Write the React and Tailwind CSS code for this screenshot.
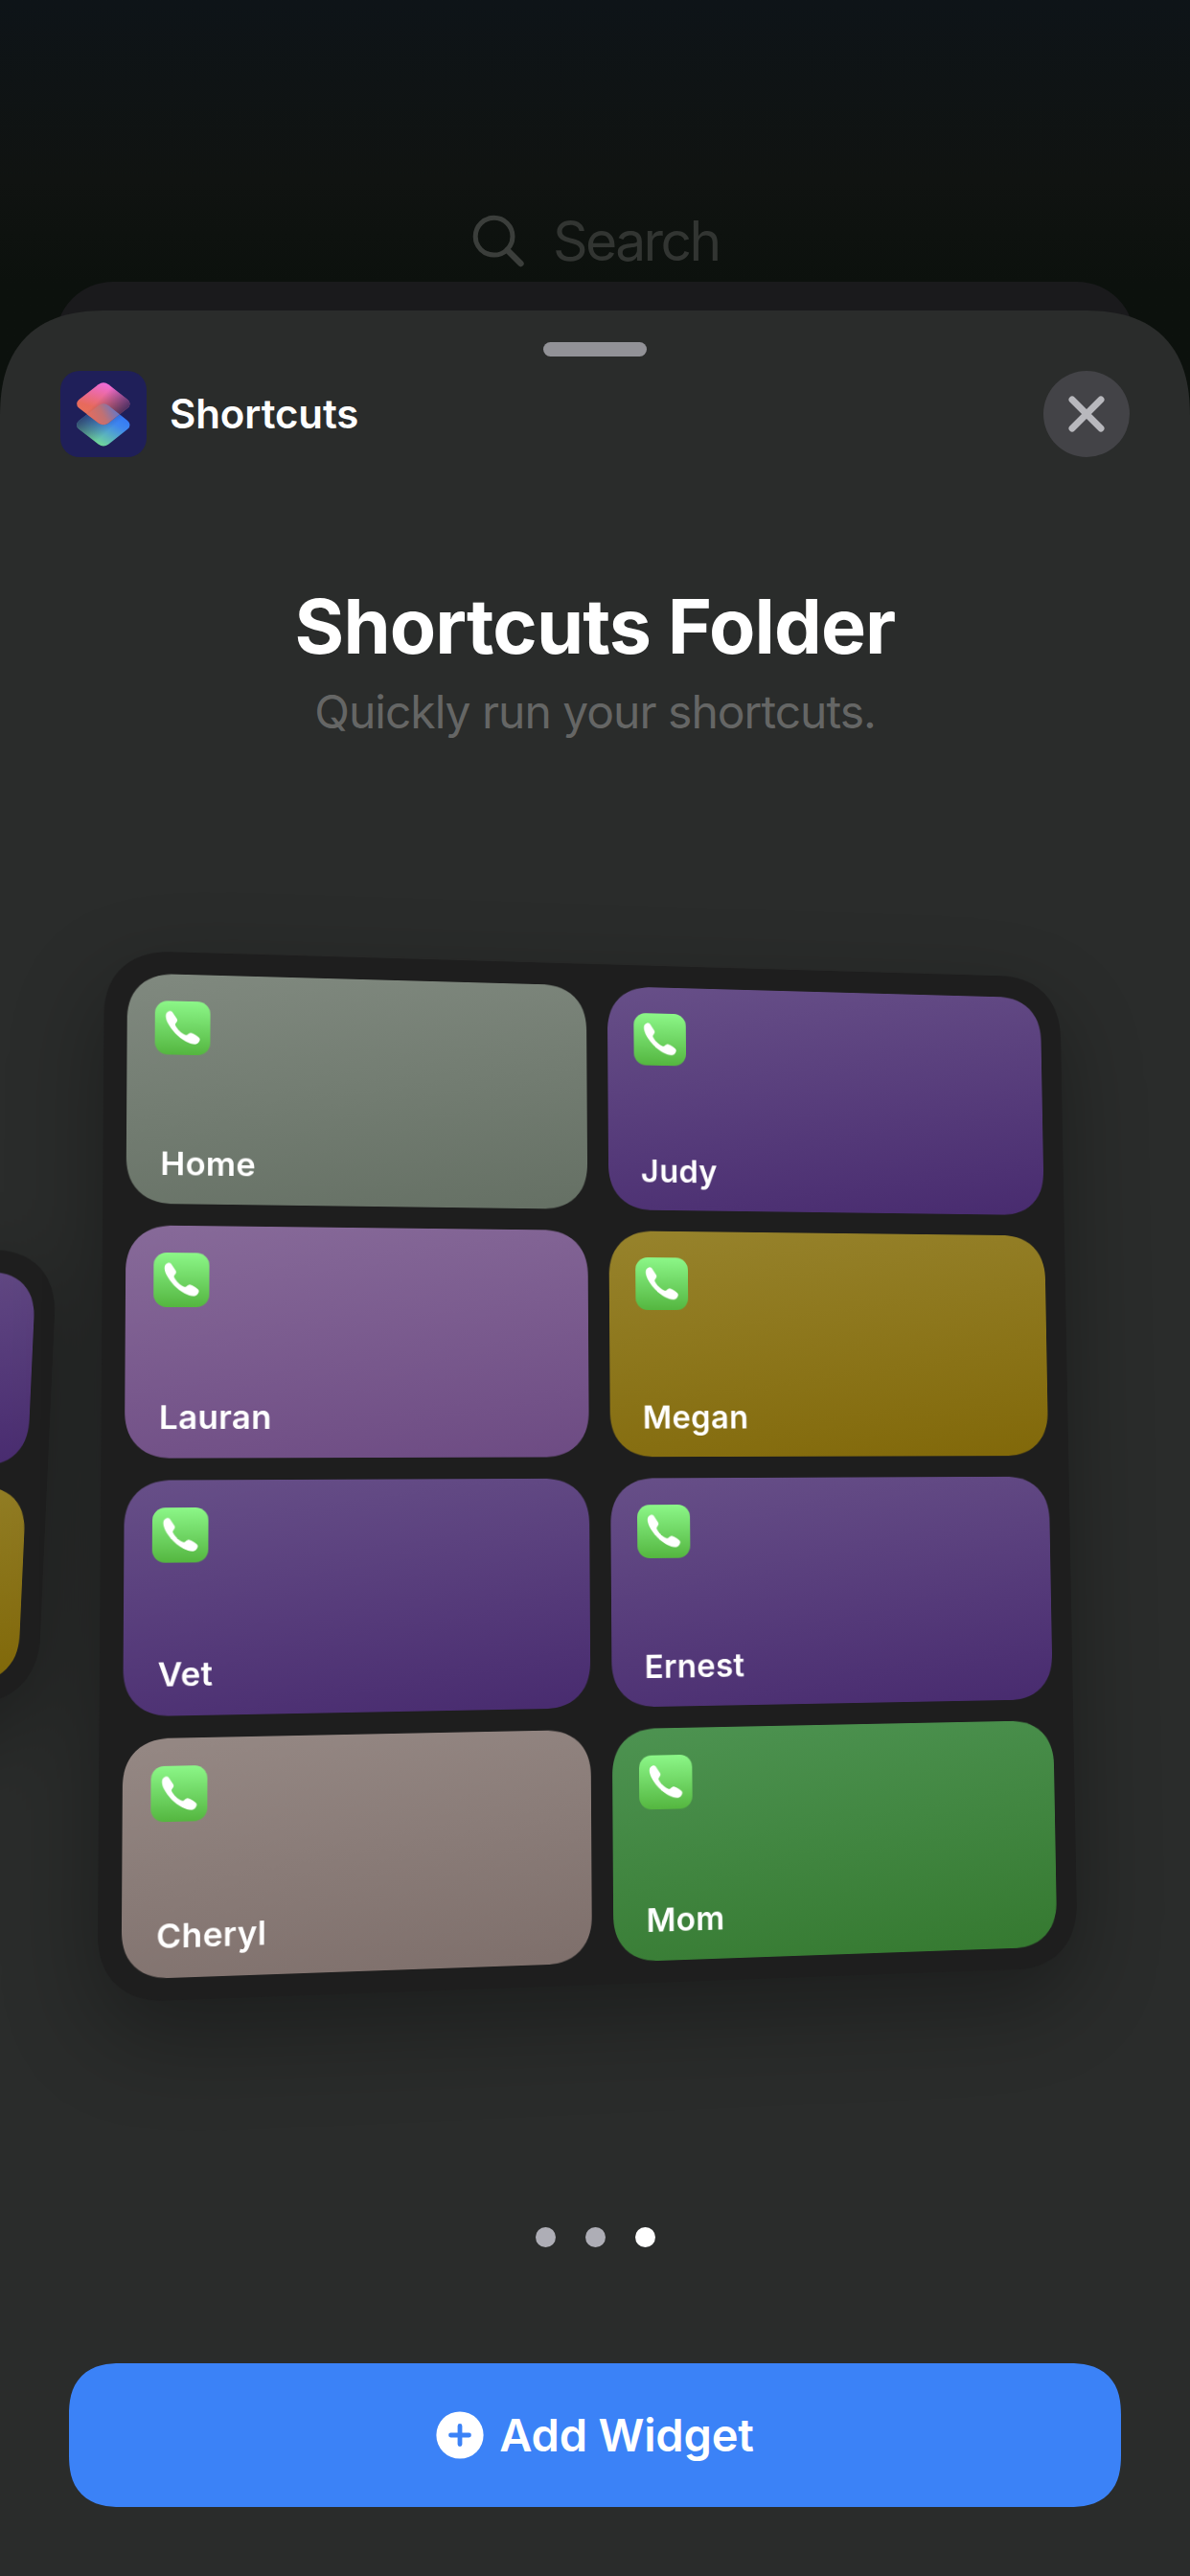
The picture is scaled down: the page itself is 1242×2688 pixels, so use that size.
const WIDGET_W = 1092

const largeTiles = [
  { name: 'Home', bg: 'bg-[linear-gradient(172deg,#80897f,#657064)]' },
  { name: 'Judy', bg: 'bg-[linear-gradient(172deg,#674f88,#482b6f)]' },
  { name: 'Lauran', bg: 'bg-[linear-gradient(172deg,#876a99,#6d4b83)]' },
  { name: 'Megan', bg: 'bg-[linear-gradient(172deg,#97832c,#816809)]' },
  { name: 'Vet', bg: 'bg-[linear-gradient(172deg,#674f88,#482b6f)]' },
  { name: 'Ernest', bg: 'bg-[linear-gradient(172deg,#674f88,#482b6f)]' },
  { name: 'Cheryl', bg: 'bg-[linear-gradient(172deg,#958884,#7e6f6b)]' },
  { name: 'Mom', bg: 'bg-[linear-gradient(172deg,#4d9351,#357930)]' },
]

// The neighbouring page only peeks in, its labels are out of view
const mediumTiles = largeTiles.slice(0, 4).map(tile => ({ ...tile, hideLabel: true }))

// Corners of each card on the carousel: top left, top right, bottom right, bottom left
const largeQuad = [[108.9, 218.3], [1106, 247], [1125, 1279.8], [101.6, 1317.3]]
const mediumQuad = [[-1060, 503], [60, 533], [39, 1002], [-1090, 1043]]

// matrix3d that maps a flat w x h box onto four corners
function quadTransform(w, h, [[x0, y0], [x1, y1], [x2, y2], [x3, y3]]) {
  const dx1 = x1 - x2
  const dx2 = x3 - x2
  const dy1 = y1 - y2
  const dy2 = y3 - y2
  const sx = x0 - x1 + x2 - x3
  const sy = y0 - y1 + y2 - y3
  const det = dx1 * dy2 - dx2 * dy1
  const g = (sx * dy2 - dx2 * sy) / det
  const k = (dx1 * sy - sx * dy1) / det
  const m = [
    (x1 - x0 + g * x1) / w, (y1 - y0 + g * y1) / w, 0, g / w,
    (x3 - x0 + k * x3) / h, (y3 - y0 + k * y3) / h, 0, k / h,
    0, 0, 1, 0,
    x0, y0, 0, 1,
  ]
  return `matrix3d(${m.map(n => n.toFixed(10)).join(',')})`
}

function PhoneIcon() {
  return (
    <div className="flex h-[60px] w-[60px] rounded-[14px] bg-linear-to-b from-[#8cf788] to-[#54b63f]">
      <svg viewBox="0 0 60 60" className="h-full w-full" fill="#fff">
        <path d="M13.2 12.7C14.7 11.3 17.2 10.5 18.7 12.2L23.8 20C25.4 23.2 21.3 24.2 22 27C24.2 31.6 28.6 35.8 32.6 37.6C35.8 38.7 36 34.9 39.4 35.2C42 36 45.6 38 48 40.4C49.6 42.2 48.2 44.8 46.6 46.4C43.8 49 38.4 47.4 33.6 44.9C25 40.3 17.6 32 13.8 24.4C11.5 19.6 10.9 15 13.2 12.7Z" />
      </svg>
    </div>
  )
}

function Tile({ name, bg, hideLabel }) {
  return (
    <div className={`flex flex-col justify-between rounded-[52px] pt-[30px] pb-[21px] pl-[30px] [corner-shape:superellipse(1.2)] ${bg}`}>
      <PhoneIcon />
      {!hideLabel && (
        <span className="pl-[7px] text-[36px] leading-[48px] font-semibold tracking-[0.3px] text-white">{name}</span>
      )}
    </div>
  )
}

function Widget({ tiles, height, quad, rows }) {
  return (
    <div
      className={`absolute top-0 left-0 grid w-[1092px] origin-top-left grid-cols-2 gap-6 rounded-[74px] bg-[#1e1e1e] p-[24.5px] shadow-[0_36px_100px_rgba(0,0,0,0.32)] [corner-shape:superellipse(1.2)] ${rows}`}
      style={{ transform: quadTransform(WIDGET_W, height, quad) }}
    >
      {tiles.map(tile => <Tile key={tile.name} {...tile} />)}
    </div>
  )
}

function ShortcutsLogo() {
  return (
    <svg viewBox="0 0 90 90" className="h-[90px] w-[90px]">
      <defs>
        <linearGradient id="top" x1="0.6" y1="0" x2="0.3" y2="0.8">
          <stop offset="0" stopColor="#f06be0" />
          <stop offset="0.75" stopColor="#e76a5c" />
          <stop offset="1" stopColor="#e8705a" />
        </linearGradient>
        <linearGradient id="topFade" x1="0.5" y1="0.3" x2="0.95" y2="0.65">
          <stop offset="0" stopColor="#1f1f59" stopOpacity="0" />
          <stop offset="1" stopColor="#1f1f59" stopOpacity="0.8" />
        </linearGradient>
        <linearGradient id="bottom" x1="0.9" y1="0.3" x2="0.4" y2="1">
          <stop offset="0" stopColor="#3478f6" />
          <stop offset="0.3" stopColor="#3f87ee" />
          <stop offset="1" stopColor="#74dc92" />
        </linearGradient>
        <linearGradient id="bottomFade" x1="0.05" y1="0.35" x2="0.5" y2="0.75">
          <stop offset="0" stopColor="#1f1f59" stopOpacity="0.75" />
          <stop offset="1" stopColor="#1f1f59" stopOpacity="0" />
        </linearGradient>
        <linearGradient id="overlap" x1="0.22" y1="0.85" x2="0.82" y2="0.6">
          <stop offset="0" stopColor="#e76c5d" />
          <stop offset="0.45" stopColor="#bf7174" />
          <stop offset="1" stopColor="#5079dc" />
        </linearGradient>
        <clipPath id="lower">
          <path d="M39.6 36.3Q45 32.2 50.4 36.3L70.2 52Q75 56.4 70.2 60.8L50.4 76.4Q45 80.5 39.6 76.4L19.4 60.8Q14.6 56.4 19.4 52Z" />
        </clipPath>
      </defs>
      <rect width="90" height="90" rx="20" fill="#1f1f59" />
      <path fill="url(#bottom)" d="M39.6 36.3Q45 32.2 50.4 36.3L70.2 52Q75 56.4 70.2 60.8L50.4 76.4Q45 80.5 39.6 76.4L19.4 60.8Q14.6 56.4 19.4 52Z" />
      <path fill="url(#bottomFade)" d="M39.6 36.3Q45 32.2 50.4 36.3L70.2 52Q75 56.4 70.2 60.8L50.4 76.4Q45 80.5 39.6 76.4L19.4 60.8Q14.6 56.4 19.4 52Z" />
      <path fill="url(#top)" d="M39.6 14.2Q45 10.1 50.4 14.2L70.2 29.9Q75 34.3 70.2 38.7L50.4 54.3Q45 58.4 39.6 54.3L19.4 38.7Q14.6 34.3 19.4 29.9Z" />
      <path fill="url(#topFade)" d="M39.6 14.2Q45 10.1 50.4 14.2L70.2 29.9Q75 34.3 70.2 38.7L50.4 54.3Q45 58.4 39.6 54.3L19.4 38.7Q14.6 34.3 19.4 29.9Z" />
      <g clipPath="url(#lower)">
        <path fill="url(#overlap)" d="M39.6 14.2Q45 10.1 50.4 14.2L70.2 29.9Q75 34.3 70.2 38.7L50.4 54.3Q45 58.4 39.6 54.3L19.4 38.7Q14.6 34.3 19.4 29.9Z" />
      </g>
    </svg>
  )
}

export default function App() {
  return (
    <div className="flex h-[2688px] w-[1242px] flex-col overflow-hidden bg-linear-to-b from-[#0e1418] via-[#101311] via-7% to-[#0c110d] to-11% font-[Inter,'Liberation_Sans',sans-serif]">

      {/* Dimmed home screen search */}
      <div className="flex h-[324px] shrink-0 flex-col justify-between pt-[216px]">
        <div className="flex h-[72px] items-center pl-[491px]">
          <svg viewBox="0 0 60 60" className="h-[60px] w-[60px]" fill="none" stroke="#3b3e3b" strokeLinecap="round">
            <circle cx="24.6" cy="24.7" r="19.4" strokeWidth="5" />
            <path d="M38.5 39L52.5 53" strokeWidth="6.4" />
          </svg>
          <span className="pl-[26px] text-[57px] leading-[72px] tracking-[-2.6px] text-[#323532]">Search</span>
        </div>
        <div className="mx-[58px] -mb-[60px] h-[90px] shrink-0 rounded-t-[60px] bg-[#1a1a1c]" />
      </div>

      {/* Sheet */}
      <div className="relative flex grow flex-col overflow-hidden rounded-t-[112px] bg-[#2a2c2b] pt-[33px] [corner-shape:superellipse(1.3)]">
        <div className="h-[15px] w-[108px] shrink-0 self-center rounded-full bg-[#929297]" />

        <div className="mt-[15px] flex items-center px-[63px]">
          <ShortcutsLogo />
          <span className="pl-[24px] text-[42px] leading-[60px] font-semibold tracking-[-0.1px] text-white">Shortcuts</span>
          <button className="ml-auto flex h-[90px] w-[90px] items-center justify-center rounded-full bg-[#434347]">
            <svg viewBox="0 0 40 40" className="h-[40px] w-[40px]" stroke="#b8b8bd" strokeWidth="7" strokeLinecap="round">
              <path d="M5 5L35 35M35 5L5 35" />
            </svg>
          </button>
        </div>

        <h1 className="mt-[128px] text-center text-[79px] leading-[96px] font-bold tracking-[-0.9px] text-white">Shortcuts Folder</h1>
        <p className="mt-[12px] text-center text-[48px] leading-[60px] tracking-[-1px] text-[#656665]">Quickly run your shortcuts.</p>

        {/* Widget carousel */}
        <div className="relative h-[1551px] shrink-0">
          <Widget tiles={mediumTiles} height={510} quad={mediumQuad} rows="h-[510px] grid-rows-2" />
          <Widget tiles={largeTiles} height={1146} quad={largeQuad} rows="h-[1146px] grid-rows-4" />
        </div>

        <div className="flex justify-center gap-[31px]">
          <span className="h-[21px] w-[21px] rounded-full bg-[#aeaeb6]" />
          <span className="h-[21px] w-[21px] rounded-full bg-[#aeaeb6]" />
          <span className="h-[21px] w-[21px] rounded-full bg-white" />
        </div>

        <button className="mx-[72px] mt-[121px] flex h-[150px] items-center justify-center gap-[16px] rounded-[54px] bg-[#3b82f7] text-white [corner-shape:superellipse(1.3)]">
          <svg viewBox="0 0 50 50" className="h-[50px] w-[50px]">
            <circle cx="25" cy="25" r="24.6" fill="#fff" />
            <path d="M25 15.500V34.500M15.500 25H34.500" stroke="#3b82f7" strokeWidth="4.800" strokeLinecap="round" />
          </svg>
          <span className="text-[47px] leading-[60px] font-semibold tracking-[-0.2px]">Add Widget</span>
        </button>
      </div>
    </div>
  )
}
